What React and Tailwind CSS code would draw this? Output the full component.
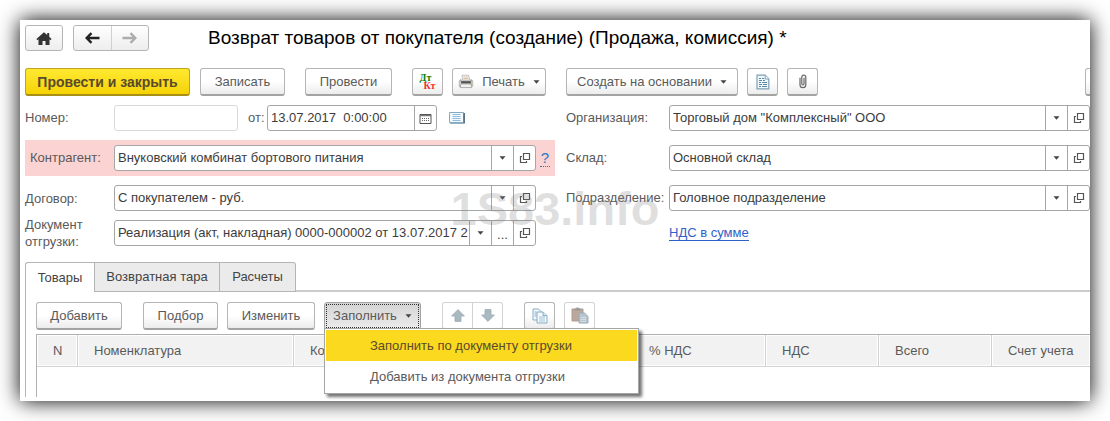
import React from "react";

const btn =
  "flex h-7 shrink-0 items-center justify-center rounded-[3px] border border-[#b5b5b5] border-b-2 border-b-[#a3a3a3] bg-linear-to-b from-white from-50% to-[#ececec] text-[#5a5a5a] whitespace-nowrap";

function Caret() {
  return (
    <svg width="7" height="4" viewBox="0 0 7 4" className="shrink-0" aria-hidden="true">
      <path d="M0.5 0.3h6L3.5 3.8z" fill="#444" />
    </svg>
  );
}

function OpenIcon() {
  return (
    <svg width="12" height="12" viewBox="0 0 12 12" fill="none" stroke="#555" strokeWidth="1.2" aria-hidden="true">
      <path d="M4.500 1.500h6v6h-6z" />
      <path d="M3 4.500H1.500v6h6V9" />
    </svg>
  );
}

function CalendarIcon() {
  return (
    <svg width="13" height="11" viewBox="0 0 13 11" aria-hidden="true">
      <path d="M1 1.5h11v9H1z" fill="#fff" stroke="#555" />
      <path d="M1 2.6h11" stroke="#777" strokeWidth="1.2" />
      <path d="M3 5.5h8M3 7.5h8" stroke="#666" strokeDasharray="1 1" />
    </svg>
  );
}

function ListIcon() {
  return (
    <svg width="16" height="12" viewBox="0 0 16 12" aria-hidden="true">
      <path d="M0.5 0.5h14v10h-14z" fill="#f2fafe" stroke="#86a9bd" />
      <path d="M15.200 1v10.500" fill="none" stroke="#4e6473" strokeWidth="1.400" />
      <path d="M1 11.400h14" stroke="#86a9bd" />
      <path d="M3.500 2.500h8M3.500 4.500h8M3.500 6.500h8M3.500 8.500h8" stroke="#8fbbe0" />
    </svg>
  );
}

function HomeIcon() {
  return (
    <svg width="16" height="13" viewBox="0 0 16 13" fill="#333" aria-hidden="true">
      <path d="M8 0.200 0.400 7l1 1.200 1.100-.9V13h4V9h3v4h4V7.300l1.100.9 1-1.200L13.200 4.700V1h-2v1.900z" />
    </svg>
  );
}

function Arrow({ right }) {
  return (
    <svg width="15" height="12" viewBox="0 0 15 12" fill="none" stroke={right ? "#adadad" : "#222"} strokeWidth="2.4" aria-hidden="true">
      {right ? <path d="M0.5 6h13M8.5 1.200 13.300 6l-4.800 4.800" /> : <path d="M14.500 6h-13M6.500 1.200 1.700 6l4.800 4.800" />}
    </svg>
  );
}

function PrinterIcon() {
  return (
    <svg width="16" height="15" viewBox="0 0 16 15" aria-hidden="true">
      <path d="M4 1.200h6.500L12 6H4.500z" fill="#fbfbfb" stroke="#aaa" strokeWidth=".7" />
      <path d="M5.200 3h5M5.500 4.500h5" stroke="#d6a878" strokeWidth=".7" />
      <path d="M3 4.800 .8 7v5.200l2 1.400h10.400l2-1.600V7L13 4.800l-.6 1.600H3.600z" fill="#a9a9a9" />
      <path d="M3.200 7.200h9.600v2H3.200z" fill="#555" />
      <path d="M1 7.500h2v4H1zM13 7.500h2v4h-2z" fill="#c9c9c9" />
      <path d="M3 10h10l.8 3.600H2.200z" fill="#f1f1f1" stroke="#999" strokeWidth=".7" />
      <path d="M12.600 10.200h1.600" stroke="#d99b3f" />
    </svg>
  );
}

function ReportIcon() {
  return (
    <svg width="14" height="16" viewBox="0 0 14 16" aria-hidden="true">
      <path d="M1 1.200h8.200L12.800 5v9.800H1z" fill="#eef7fc" stroke="#7f9fb3" strokeWidth="1.200" />
      <path d="M9.200 1.200V5h3.600" fill="#fff" stroke="#7f9fb3" />
      <path d="M3 4.500h2M6 4.500h2M3 6.500h3M7 6.500h2M3 8.500h2M6 8.500h5M3 10.500h3M7 10.500h4M3 12.500h2M6 12.500h5" stroke="#5d87a3" />
    </svg>
  );
}

function ClipIcon() {
  return (
    <svg width="8" height="15" viewBox="0 0 8 15" fill="none" stroke="#666" strokeWidth="1.200" strokeLinecap="round" aria-hidden="true">
      <path d="M1 4v6.800a2.900 2.900 0 0 0 5.800 0V3.200a2 2 0 0 0-4 0v6.600a1.100 1.100 0 0 0 2.200 0V4.200" />
    </svg>
  );
}

function BlockArrow({ down }) {
  return (
    <svg width="14" height="13" viewBox="0 0 14 13" aria-hidden="true">
      <path
        d={down ? "M7 12.400 13.400 6H10V.6H4V6H.6z" : "M7 .6.6 7H4v5.400h6V7h3.400z"}
        fill="#a9b9c2"
        stroke="#9aabb5"
        strokeWidth=".8"
      />
    </svg>
  );
}

function CopyIcon() {
  return (
    <svg width="16" height="16" viewBox="0 0 16 16" fill="#f3fafe" stroke="#86acc2" aria-hidden="true">
      <path d="M1 1h5.500L9 3.500V12H1z" />
      <path d="M2.500 4h2M2.500 6h2M2.500 8h2" />
      <path d="M5 4h6l4 3.600V15H5z" />
      <path d="M11 4v3.600h4" fill="#d8eaf4" />
      <path d="M7 9h6M7 11h6M7 13h6" stroke="#a3c3d5" />
    </svg>
  );
}

function PasteIcon() {
  return (
    <svg width="18" height="17" viewBox="0 0 18 17" aria-hidden="true">
      <path d="M1 2h11v12H1z" fill="#bba79b" stroke="#b19c90" />
      <path d="M3.500 3.600V1.600h1.600L5.600.4h1.800l.5 1.200h1.600v2z" fill="#999" />
      <path d="M8 6h5.500l3.500 3.400V16H8z" fill="#b6c5ce" stroke="#9aabb5" />
      <path d="M9.500 10.500h5.500M9.500 12.500h5.500M9.500 14.500h5.500" stroke="#d5dfe4" />
    </svg>
  );
}

function Field({ id, value, className = "", actions }) {
  return (
    <div className={`flex h-[26px] min-w-0 items-stretch overflow-hidden rounded-[3px] border border-[#a6a6a6] bg-white ${className}`}>
      <input id={id} type="text" defaultValue={value} className="w-full min-w-0 flex-1 bg-transparent pl-[3px] text-[#3c3c3c] outline-none" />
      {actions.map(([label, icon]) => (
        <button key={label} type="button" aria-label={label} className="flex w-[22px] shrink-0 items-center justify-center border-l border-[#a6a6a6] text-[#444]">
          {icon}
        </button>
      ))}
    </div>
  );
}

const selectOpen = [
  ["Выбрать", <Caret />],
  ["Открыть", <OpenIcon />],
];

const selectMoreOpen = [
  ["Выбрать", <Caret />],
  ["Показать все", <span className="pt-1">...</span>],
  ["Открыть", <OpenIcon />],
];

function LeftRow({ id, label, value, actions = selectOpen }) {
  return (
    <div className="flex w-[530px] shrink-0 items-center">
      <label htmlFor={id} className="w-[89px] shrink-0 leading-[17px]">{label}</label>
      <Field id={id} value={value} actions={actions} className="w-[422px]" />
    </div>
  );
}

function RightRow({ id, label, value }) {
  return (
    <div className="flex min-w-0 flex-1 items-center">
      <label htmlFor={id} className="w-[103px] shrink-0">{label}</label>
      <Field id={id} value={value} actions={selectOpen} className="flex-1" />
    </div>
  );
}

const columns = [
  ["N", "w-[41px]"],
  ["Номенклатура", "w-[216px]"],
  ["Количество", "w-[113px]"],
  ["Цена", "w-[113px]"],
  ["Сумма", "w-[113px]"],
  ["% НДС", "w-[133px]"],
  ["НДС", "w-[113px]"],
  ["Всего", "w-[113px]"],
  ["Счет учета", ""],
];

export default function App() {
  return (
    <div className="bg-white p-5 font-['Liberation_Sans',Arial,sans-serif] text-[13px] leading-4 text-[#5a5a5a]">
      <main className="relative overflow-hidden bg-white pb-1 pl-[5px] shadow-[0_0_20px_#000]">
        <header className="flex items-center pt-1">
          <button type="button" aria-label="Начальная страница" className="flex h-[26px] w-[38px] items-center justify-center rounded-[3px] border border-[#b5b5b5] bg-linear-to-b from-white to-[#ededed]">
            <HomeIcon />
          </button>
          <div className="ml-[10px] flex h-[26px] w-[76px] rounded-[3px] border border-[#b5b5b5] bg-linear-to-b from-white to-[#ededed]">
            <button type="button" aria-label="Назад" className="flex flex-1 items-center justify-center border-r border-[#d0d0d0]"><Arrow /></button>
            <button type="button" aria-label="Вперед" className="flex flex-1 items-center justify-center"><Arrow right /></button>
          </div>
          <h1 className="ml-[59px] text-[19px] leading-7 whitespace-nowrap text-black">
            Возврат товаров от покупателя (создание) (Продажа, комиссия) *
          </h1>
        </header>

        <div className="mt-4 flex items-center" role="toolbar">
          <button type="button" className="flex h-7 w-[165px] shrink-0 items-center justify-center rounded-[3px] border border-b-2 border-[#c0a320] border-b-[#a88f16] bg-linear-to-b from-[#ffe92e] to-[#f5d200] text-[14px] font-bold whitespace-nowrap text-[#5a4a2c]">
            Провести и закрыть
          </button>
          <button type="button" className={`${btn} ml-[10px] w-[85px]`}>Записать</button>
          <button type="button" className={`${btn} ml-5 w-[87px]`}>Провести</button>
          <button type="button" aria-label="Дт Кт" className={`${btn} ml-5 w-[31px]`}>
            <span className="flex flex-col font-['Liberation_Serif',serif] text-[10px] leading-2 font-bold">
              <span className="pr-1 text-[#0a7d0a]">Дт</span>
              <span className="pl-1 text-[#f03030]">Кт</span>
            </span>
          </button>
          <button type="button" className={`${btn} ml-[9px] w-[94px] gap-2`}><PrinterIcon />Печать<Caret /></button>
          <button type="button" className={`${btn} ml-5 w-[172px] gap-2`}>Создать на основании<Caret /></button>
          <button type="button" aria-label="Отчет" className={`${btn} ml-[9px] w-[31px]`}><ReportIcon /></button>
          <button type="button" aria-label="Вложения" className={`${btn} ml-[9px] w-[31px]`}><ClipIcon /></button>
          <button type="button" aria-label="Еще" className={`${btn} -mr-5 ml-auto w-[25px]`} />
        </div>

        <form className="mt-[9px] flex flex-col gap-[9px]">
          <div className="flex gap-[11px]">
            <div className="flex w-[530px] shrink-0 items-center">
              <label htmlFor="number" className="w-[89px]">Номер:</label>
              <input id="number" type="text" className="h-[26px] w-[124px] rounded-[3px] border border-[#d9d9d9] bg-white px-1 outline-none" />
              <label htmlFor="date" className="w-[29px] pl-[10px]">от:</label>
              <Field id="date" value="13.07.2017  0:00:00" actions={[["Календарь", <CalendarIcon />]]} className="w-[170px]" />
              <button type="button" aria-label="Список" className="ml-3"><ListIcon /></button>
            </div>
            <RightRow id="org" label="Организация:" value={'Торговый дом "Комплексный" ООО'} />
          </div>

          <div className="flex gap-[11px]">
            <div className="flex h-9 w-[530px] shrink-0 items-center bg-[#fbd3d3]">
              <label htmlFor="partner" className="w-[89px] shrink-0 pl-[5px]">Контрагент:</label>
              <Field id="partner" value="Внуковский комбинат бортового питания" actions={selectOpen} className="w-[422px]" />
              <a href="#help" className="ml-1 w-[10px] border-b border-dotted border-[#2a7ac0] text-center text-[15px] leading-4 text-[#2a7ac0]">?</a>
            </div>
            <RightRow id="warehouse" label="Склад:" value="Основной склад" />
          </div>

          <div className="flex gap-[11px]">
            <LeftRow id="contract" label="Договор:" value="С покупателем - руб." />
            <RightRow id="division" label="Подразделение:" value="Головное подразделение" />
          </div>

          <div className="flex h-[26px] items-center gap-[11px]">
            <LeftRow id="shipment" label="Документ отгрузки:" value="Реализация (акт, накладная) 0000-000002 от 13.07.2017 2" actions={selectMoreOpen} />
            <a href="#vat" className="ml-[103px] border-b border-[#2f62c9] leading-[14px] text-[#2f62c9]">НДС в сумме</a>
          </div>
        </form>

        <div className="mt-4 flex" role="tablist">
          <button type="button" role="tab" aria-selected="true" className="h-[30px] w-[69px] rounded-tl-[3px] border-t border-l border-[#b5b5b5] bg-white text-[#444]">Товары</button>
          <button type="button" role="tab" aria-selected="false" className="h-[30px] w-[126px] border border-[#b5b5b5] bg-[#ebebeb] text-[#444]">Возвратная тара</button>
          <button type="button" role="tab" aria-selected="false" className="h-[30px] w-[76px] rounded-tr-[3px] border border-l-0 border-[#b5b5b5] bg-[#ebebeb] text-[#444]">Расчеты</button>
          <div className="flex-1 border-b-2 border-[#cccccc]" />
        </div>

        <section className="border-l border-[#b5b5b5] pt-[10px] pl-[10px]">
          <div className="flex items-center" role="toolbar">
            <button type="button" className={`${btn} w-[86px]`}>Добавить</button>
            <button type="button" className={`${btn} ml-[21px] w-[75px]`}>Подбор</button>
            <button type="button" className={`${btn} ml-[9px] w-[88px]`}>Изменить</button>
            <div className="relative ml-[9px]">
              <button type="button" aria-expanded="true" className="flex h-7 w-[97px] rounded-[3px] border border-[#a3a3a3] bg-linear-to-b from-[#d4d4d4] to-[#ececec] p-px text-[#5a5a5a]">
                <span className="flex h-full flex-1 items-center justify-center gap-2 border border-dotted border-[#333]">Заполнить<Caret /></span>
              </button>
              <div role="menu" className="absolute top-[26px] left-0 z-20 flex w-[315px] flex-col border border-[#a6a6a6] bg-white p-px shadow-[3px_3px_3px_#0000008c]">
                <button type="button" role="menuitem" className="h-[31px] bg-[#fbd91f] pl-11 text-left text-[#5a4a2c]">Заполнить по документу отгрузки</button>
                <button type="button" role="menuitem" className="h-[31px] pl-11 text-left">Добавить из документа отгрузки</button>
              </div>
            </div>
            <div className="ml-[21px] flex h-7 w-[61px] rounded-[3px] border border-b-2 border-[#d2d2d2] bg-white">
              <button type="button" aria-label="Вверх" className="flex flex-1 items-center justify-center border-r border-[#d2d2d2]"><BlockArrow /></button>
              <button type="button" aria-label="Вниз" className="flex flex-1 items-center justify-center"><BlockArrow down /></button>
            </div>
            <button type="button" aria-label="Копировать" className={`${btn} ml-[21px] w-[31px]`}><CopyIcon /></button>
            <button type="button" aria-label="Вставить" className="ml-[9px] flex h-7 w-[31px] items-center justify-center rounded-[3px] border border-b-2 border-[#d2d2d2] bg-white"><PasteIcon /></button>
          </div>

          <div className="mt-1 border-t border-l border-[#b0b0b0]">
            <table className="w-full table-fixed border-separate border-spacing-0">
              <thead>
                <tr className="h-8">
                  {columns.map(([name, width]) => (
                    <th key={name} className={`${width} border-r border-b border-[#d2d2d2] bg-[#f2f2f2] pl-4 text-left font-normal whitespace-nowrap shadow-[inset_0_0_0_1px_#fff] last:border-r-0`}>{name}</th>
                  ))}
                </tr>
              </thead>
              <tbody>
                <tr className="h-[30px]"><td colSpan={9} /></tr>
              </tbody>
            </table>
          </div>
        </section>

        <div className="pointer-events-none absolute inset-0 z-10 flex items-center justify-center pb-1 text-[47px] leading-none font-bold text-[#808080]/25" aria-hidden="true">
          1S83.info
        </div>
      </main>
    </div>
  );
}
